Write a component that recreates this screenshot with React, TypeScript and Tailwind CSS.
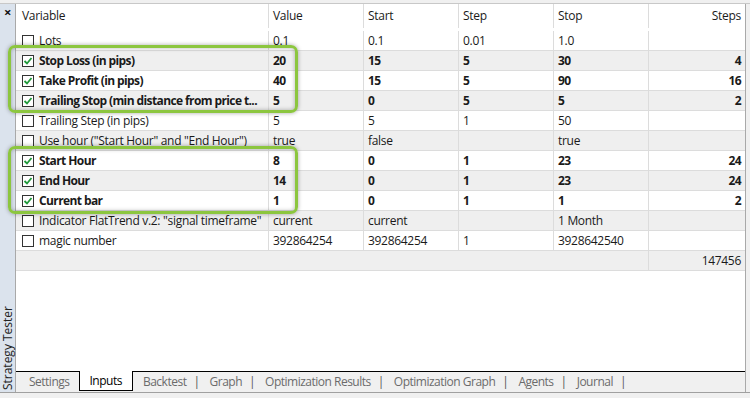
import React from 'react';

interface Row {
    name: string;
    checked: boolean;
    value: string;
    start: string;
    step: string;
    stop: string;
    steps: string;
}

const rows: Row[] = [
    { name: 'Lots', checked: false, value: '0.1', start: '0.1', step: '0.01', stop: '1.0', steps: '' },
    { name: 'Stop Loss (in pips)', checked: true, value: '20', start: '15', step: '5', stop: '30', steps: '4' },
    { name: 'Take Profit (in pips)', checked: true, value: '40', start: '15', step: '5', stop: '90', steps: '16' },
    { name: 'Trailing Stop (min distance from price t...', checked: true, value: '5', start: '0', step: '5', stop: '5', steps: '2' },
    { name: 'Trailing Step (in pips)', checked: false, value: '5', start: '5', step: '1', stop: '50', steps: '' },
    { name: 'Use hour ("Start Hour" and "End Hour")', checked: false, value: 'true', start: 'false', step: '', stop: 'true', steps: '' },
    { name: 'Start Hour', checked: true, value: '8', start: '0', step: '1', stop: '23', steps: '24' },
    { name: 'End Hour', checked: true, value: '14', start: '0', step: '1', stop: '23', steps: '24' },
    { name: 'Current bar', checked: true, value: '1', start: '0', step: '1', stop: '1', steps: '2' },
    { name: 'Indicator FlatTrend v.2: "signal timeframe"', checked: false, value: 'current', start: 'current', step: '', stop: '1 Month', steps: '' },
    { name: 'magic number', checked: false, value: '392864254', start: '392864254', step: '1', stop: '3928642540', steps: '' },
];

const grid = 'grid grid-cols-[253px_95px_95px_95px_95px_1fr]';

function CheckBox({ checked }: { checked: boolean }) {
    return (
        <span className="w-[12px] h-[12px] border border-[#333] bg-white flex items-center justify-center shrink-0">
            {checked && (
                <svg width="10" height="10" viewBox="0 0 10 10">
                    <path d="M1.5 5 L4 7.5 L8.5 2" fill="none" stroke="#1f9a3a" strokeWidth="1.8" />
                </svg>
            )}
        </span>
    );
}

function Cell({ children, right, last }: { children?: React.ReactNode; right?: boolean; last?: boolean }) {
    return (
        <div
            className={`h-full flex items-center px-[4px] whitespace-nowrap overflow-hidden ${
                right ? 'justify-end' : ''
            } ${last ? '' : 'border-r border-[#dcdcdc]'}`}
        >
            {children}
        </div>
    );
}

const tabs = ['Backtest', 'Graph', 'Optimization Results', 'Optimization Graph', 'Agents', 'Journal'];

export default function App() {
    return (
        <div
            className="relative w-[750px] h-[398px] bg-[#f0f0f0] flex flex-col overflow-hidden text-[12px] text-[#1a1a1a] tracking-[-0.3px]"
            style={{ fontFamily: '"Open Sans", "Noto Sans", sans-serif' }}
        >
            <div className="h-[4px] bg-[#f0f0f0] border-b border-[#c8c8c8]" />
            <div className="flex flex-1 min-h-0">
                {/* side strip */}
                <div className="w-[15px] bg-[#dbe3ed] flex flex-col justify-between items-center">
                    <span className="text-[13px] leading-none font-bold mt-[2px] text-[#111]">×</span>
                    <span className="[writing-mode:vertical-rl] rotate-180 text-[12px] leading-[15px] mb-[2px] text-[#222] tracking-normal whitespace-nowrap">
                        Strategy Tester
                    </span>
                </div>

                <div className="flex-1 flex flex-col border-l border-r border-[#a9a9a9] min-w-0">
                    {/* table */}
                    <div className="flex-1 bg-white">
                        <div className={`${grid} h-[27px] pb-[3px]`}>
                            <Cell>
                                <span className="pl-[2px]">Variable</span>
                            </Cell>
                            <Cell>Value</Cell>
                            <Cell>Start</Cell>
                            <Cell>Step</Cell>
                            <Cell>Stop</Cell>
                            <Cell right last>
                                Steps
                            </Cell>
                        </div>
                        {rows.map((r, i) => (
                            <div
                                key={r.name}
                                className={`${grid} h-[20px] border-b border-[#dcdcdc] ${
                                    i % 2 === 1 ? 'bg-[#efefef]' : 'bg-white'
                                } ${r.checked ? 'font-bold tracking-[-0.6px]' : ''}`}
                            >
                                <Cell>
                                    <span className="flex items-center gap-[5px] pl-[2px]">
                                        <CheckBox checked={r.checked} />
                                        {r.name}
                                    </span>
                                </Cell>
                                <Cell>{r.value}</Cell>
                                <Cell>{r.start}</Cell>
                                <Cell>{r.step}</Cell>
                                <Cell>{r.stop}</Cell>
                                <Cell right last>
                                    {r.steps}
                                </Cell>
                            </div>
                        ))}
                        <div className="grid grid-cols-[633px_1fr] h-[20px] border-b border-[#dcdcdc] bg-[#efefef]">
                            <Cell />
                            <Cell right last>
                                147456
                            </Cell>
                        </div>
                    </div>

                    {/* tabs */}
                    <div className="h-[21px] flex items-stretch border-t border-black text-[#6b6b6b] tracking-[-0.5px]">
                        <span className="pl-[13px] pr-[9px] flex items-center">Settings</span>
                        <span className="-mt-px h-[20px] px-[10px] flex items-center bg-white border-x border-b border-black text-black">
                            Inputs
                        </span>
                        {tabs.map((t) => (
                            <span key={t} className="flex items-center">
                                <span className="pl-[10px] pr-[7px]">{t}</span>
                                <span className="text-[#555]">|</span>
                            </span>
                        ))}
                    </div>
                </div>
                <div className="w-[4px]" />
            </div>
            <div className="h-[6px] border-t border-[#a0a0a0] bg-[#f0f0f0]" />

            {/* highlight frames */}
            <div className="absolute left-[8px] top-[45px] w-[290px] h-[68px] rounded-[7px] border-[3px] border-[#8cc63f] shadow-[0_0_4px_rgba(0,0,0,0.35),inset_0_0_4px_rgba(0,0,0,0.3)]" />
            <div className="absolute left-[8px] top-[146px] w-[290px] h-[68px] rounded-[7px] border-[3px] border-[#8cc63f] shadow-[0_0_4px_rgba(0,0,0,0.35),inset_0_0_4px_rgba(0,0,0,0.3)]" />
        </div>
    );
}
